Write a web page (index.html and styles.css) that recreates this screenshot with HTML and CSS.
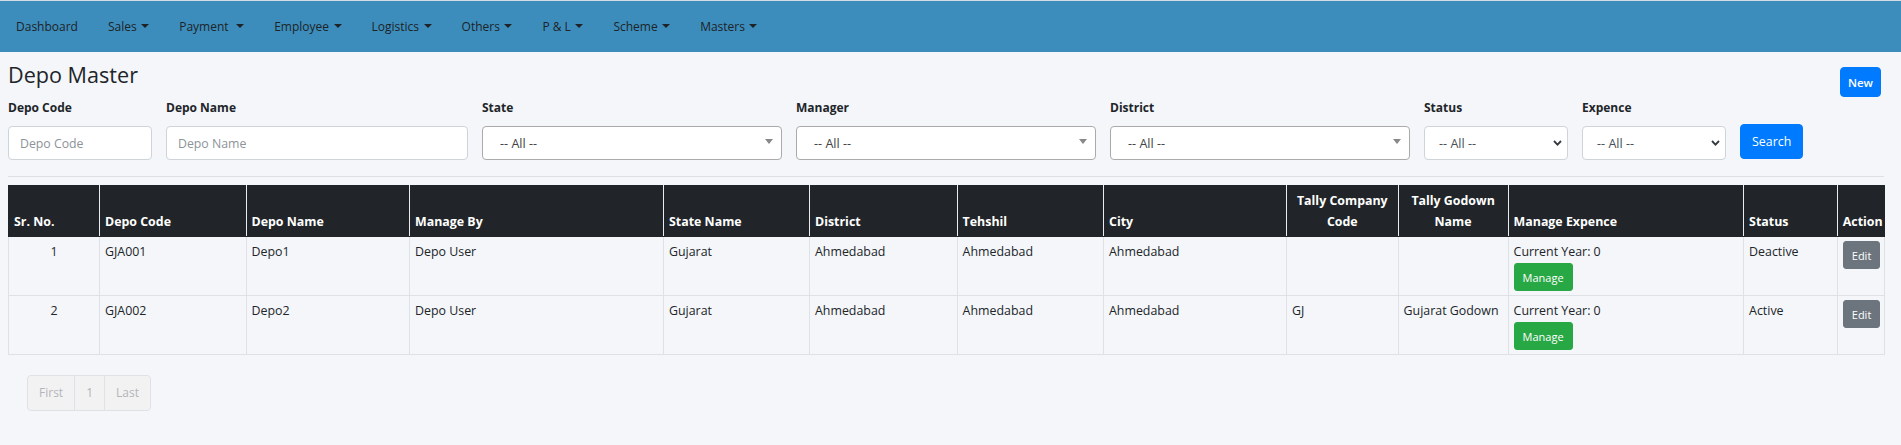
FILE: index.html
```html
<!DOCTYPE html>
<html lang="en">
<head>
<meta charset="utf-8">
<title>Depo Master</title>
<link rel="stylesheet" href="styles.css">
</head>
<body>
<nav class="topbar">
  <ul class="nav-list">
    <li><a class="nav-link">Dashboard</a></li>
    <li><a class="nav-link dropdown">Sales</a></li>
    <li><a class="nav-link dropdown">Payment&nbsp;</a></li>
    <li><a class="nav-link dropdown">Employee</a></li>
    <li><a class="nav-link dropdown">Logistics</a></li>
    <li><a class="nav-link dropdown">Others</a></li>
    <li><a class="nav-link dropdown">P &amp; L</a></li>
    <li><a class="nav-link dropdown">Scheme</a></li>
    <li><a class="nav-link dropdown">Masters</a></li>
  </ul>
</nav>

<main class="content">
  <div class="title-row">
    <h3 class="page-title">Depo Master</h3>
    <button class="btn btn-primary btn-new">New</button>
  </div>

  <div class="filters">
    <div class="field w-sm">
      <label>Depo Code</label>
      <input class="form-control" placeholder="Depo Code">
    </div>
    <div class="field w-lg">
      <label>Depo Name</label>
      <input class="form-control" placeholder="Depo Name">
    </div>
    <div class="field w-md">
      <label>State</label>
      <div class="select2"><span>-- All --</span><span class="s2-arrow"></span></div>
    </div>
    <div class="field w-md">
      <label>Manager</label>
      <div class="select2"><span>-- All --</span><span class="s2-arrow"></span></div>
    </div>
    <div class="field w-md">
      <label>District</label>
      <div class="select2"><span>-- All --</span><span class="s2-arrow"></span></div>
    </div>
    <div class="field w-sm">
      <label>Status</label>
      <div class="select-native"><span>-- All --</span>
        <svg class="chev" width="9" height="6" viewBox="0 0 9 6"><path d="M1 1 L4.5 4.6 L8 1" fill="none" stroke="#343a40" stroke-width="1.8"/></svg>
      </div>
    </div>
    <div class="field w-sm">
      <label>Expence</label>
      <div class="select-native"><span>-- All --</span>
        <svg class="chev" width="9" height="6" viewBox="0 0 9 6"><path d="M1 1 L4.5 4.6 L8 1" fill="none" stroke="#343a40" stroke-width="1.8"/></svg>
      </div>
    </div>
    <div class="field-btn">
      <button class="btn btn-primary btn-search">Search</button>
    </div>
  </div>

  <hr class="divider">

  <table class="data-table">
    <colgroup>
      <col class="c-sr"><col class="c-code"><col class="c-name"><col class="c-mgr"><col class="c-state">
      <col class="c-dist"><col class="c-teh"><col class="c-city"><col class="c-tcc"><col class="c-tgn">
      <col class="c-exp"><col class="c-status"><col class="c-act">
    </colgroup>
    <thead>
      <tr>
        <th>Sr. No.</th>
        <th>Depo Code</th>
        <th>Depo Name</th>
        <th>Manage By</th>
        <th>State Name</th>
        <th>District</th>
        <th>Tehshil</th>
        <th>City</th>
        <th class="center">Tally Company Code</th>
        <th class="center">Tally Godown Name</th>
        <th>Manage Expence</th>
        <th>Status</th>
        <th>Action</th>
      </tr>
    </thead>
    <tbody>
      <tr>
        <td class="center">1</td>
        <td>GJA001</td>
        <td>Depo1</td>
        <td>Depo User</td>
        <td>Gujarat</td>
        <td>Ahmedabad</td>
        <td>Ahmedabad</td>
        <td>Ahmedabad</td>
        <td></td>
        <td></td>
        <td><div>Current Year: 0</div><button class="btn btn-sm btn-success">Manage</button></td>
        <td>Deactive</td>
        <td><button class="btn btn-sm btn-secondary">Edit</button></td>
      </tr>
      <tr>
        <td class="center">2</td>
        <td>GJA002</td>
        <td>Depo2</td>
        <td>Depo User</td>
        <td>Gujarat</td>
        <td>Ahmedabad</td>
        <td>Ahmedabad</td>
        <td>Ahmedabad</td>
        <td>GJ</td>
        <td>Gujarat Godown</td>
        <td><div>Current Year: 0</div><button class="btn btn-sm btn-success">Manage</button></td>
        <td>Active</td>
        <td><button class="btn btn-sm btn-secondary">Edit</button></td>
      </tr>
    </tbody>
  </table>

  <ul class="pagination">
    <li class="page-item first">First</li>
    <li class="page-item">1</li>
    <li class="page-item last">Last</li>
  </ul>
</main>
</body>
</html>
```

FILE: styles.css
```css
* { box-sizing: border-box; }

body {
  margin: 0;
  background: #f4f6f9;
  font-family: "Open Sans", "Noto Sans", sans-serif;
  color: #212529;
}

/* Top navigation */
.topbar {
  border-top: 1px solid #d5dde4;
  background: #3c8dbc;
  height: 52px;
  display: flex;
  align-items: center;
}
.nav-list {
  list-style: none;
  margin: 0;
  padding: 0 0 0 1px;
  display: flex;
}
.nav-link {
  display: block;
  padding: 0 15px;
  font-size: 12px;
  line-height: 20px;
  color: #1e2327;
  cursor: pointer;
}
.dropdown::after {
  content: "";
  display: inline-block;
  margin-left: 4.5px;
  vertical-align: 3px;
  border-top: 4px solid #1e2327;
  border-left: 4px solid transparent;
  border-right: 4px solid transparent;
}

/* Content */
.content {
  padding: 0 17px 0 8px;
}
.title-row {
  display: flex;
  justify-content: space-between;
  align-items: flex-start;
}
.page-title {
  margin: 8px 0 0;
  font-size: 21.6px;
  font-weight: 400;
  line-height: 29px;
}
.btn {
  border: 1px solid transparent;
  border-radius: 4px;
  font-family: inherit;
  color: #fff;
  cursor: pointer;
}
.btn-primary { background: #007bff; border-color: #007bff; }
.btn-success { background: #28a745; border-color: #28a745; }
.btn-secondary { background: #6c757d; border-color: #6c757d; }

.btn-new {
  margin: 15px 3px 0 0;
  height: 30px;
  padding: 0 7px;
  font-size: 11.5px;
  font-weight: 600;
}

/* Filters */
.filters {
  display: flex;
  gap: 14px;
  align-items: flex-start;
}
.field label {
  display: block;
  font-size: 12px;
  font-weight: 700;
  line-height: 21px;
  margin-bottom: 8px;
}
.w-sm { width: 144px; }
.w-lg { width: 302px; }
.w-md { width: 300px; }

.form-control {
  display: block;
  width: 100%;
  height: 34px;
  border: 1px solid #ced4da;
  border-radius: 4px;
  background: #fff;
  padding: 0 11px;
  font-family: inherit;
  font-size: 12.3px;
  color: #495057;
}
.form-control::placeholder { color: #8d9399; }

.select2 {
  height: 34px;
  border: 1px solid #aaa;
  border-radius: 4px;
  background: #fff;
  display: flex;
  align-items: center;
  justify-content: space-between;
  padding: 0 8px 0 17px;
  font-size: 12.6px;
  color: #444;
}
.s2-arrow {
  width: 0;
  height: 0;
  margin-top: -4px;
  border-top: 5px solid #888;
  border-left: 4px solid transparent;
  border-right: 4px solid transparent;
}
.select-native {
  height: 34px;
  border: 1px solid #ced4da;
  border-radius: 4px;
  background: #fff;
  display: flex;
  align-items: center;
  justify-content: space-between;
  padding: 0 5px 0 14px;
  font-size: 12.6px;
  color: #495057;
}
.chev { display: block; margin-top: -1px; }

.field-btn { padding-top: 27px; }
.btn-search {
  height: 35px;
  padding: 0 11px;
  font-size: 12.4px;
}

.divider {
  margin: 16px 0 8px;
  border: 0;
  border-top: 1px solid #dde0e4;
}

/* Table */
.data-table {
  width: 100%;
  table-layout: fixed;
  border-collapse: collapse;
  font-size: 12.4px;
}
.c-sr { width: 91px; }
.c-code { width: 146.5px; }
.c-name { width: 163.5px; }
.c-mgr { width: 254px; }
.c-state { width: 146px; }
.c-dist { width: 147.6px; }
.c-teh { width: 146.4px; }
.c-city { width: 183px; }
.c-tcc { width: 111.6px; }
.c-tgn { width: 110px; }
.c-exp { width: 235.5px; }
.c-status { width: 93.7px; }
.c-act { width: 47.3px; }

.data-table th,
.data-table td {
  border: 1px solid #dee2e6;
  padding: 4px 5px;
  line-height: 21px;
  text-align: left;
  vertical-align: top;
}
.data-table thead th {
  background: #212529;
  color: #fff;
  font-weight: 700;
  vertical-align: bottom;
  border-top-color: #212529;
  border-left-color: #e9ecef;
  border-right-color: #e9ecef;
  border-bottom-color: #212529;
}
.data-table thead th:first-child { border-left-color: #212529; }
.data-table thead th:last-child { border-right-color: #212529; }
.data-table .center { text-align: center; }

.btn-sm {
  display: inline-block;
  height: 28px;
  padding: 0 8px;
  font-size: 11px;
  border-radius: 3px;
}
td .btn-sm { margin-top: 1px; }
td:last-child .btn-sm { margin-top: 0; }

/* Pagination */
.pagination {
  list-style: none;
  display: flex;
  margin: 20px 0 0 19px;
  padding: 0;
}
.page-item {
  border: 1px solid #dee2e6;
  background: #f2f2f3;
  color: #b3b5b8;
  padding: 8px 11px;
  font-size: 12px;
  line-height: 18px;
}
.page-item + .page-item { margin-left: -1px; }
.page-item.first { border-radius: 4px 0 0 4px; }
.page-item.last { border-radius: 0 4px 4px 0; }
```
